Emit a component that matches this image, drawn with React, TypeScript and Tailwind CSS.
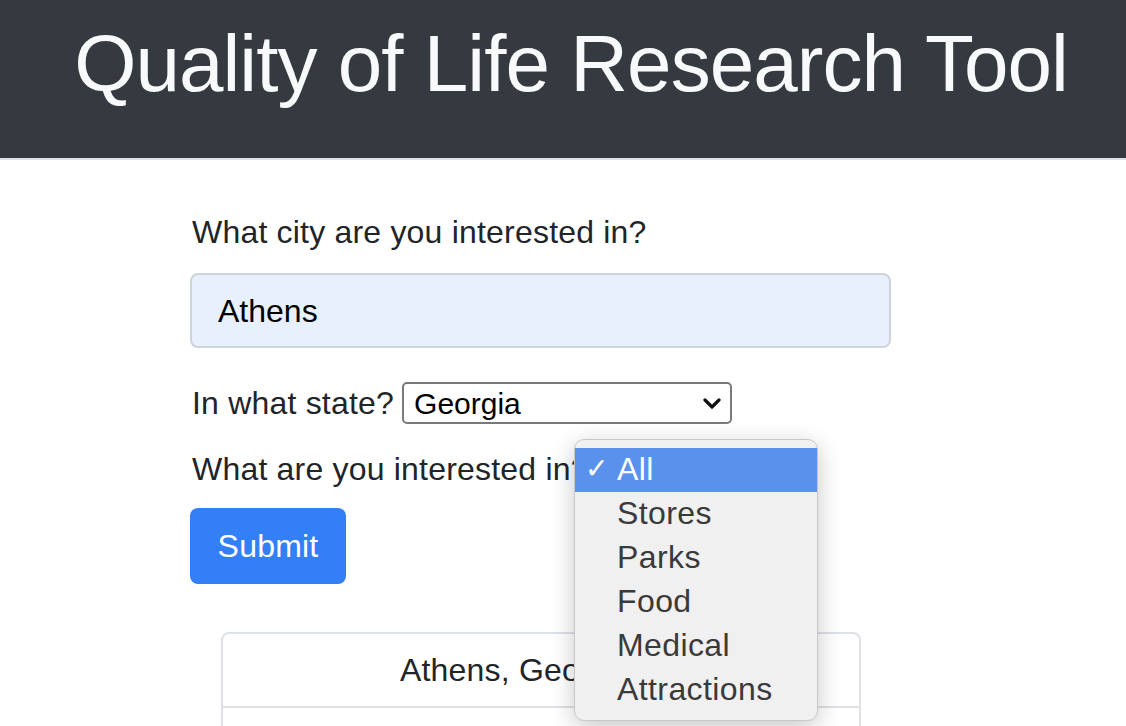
const categories = ["All", "Stores", "Parks", "Food", "Medical", "Attractions"];

const App = () => {
  return (
    <div className="min-h-screen bg-white font-['Liberation_Sans',Arial,sans-serif] text-[#212529]">
      {/* Header */}
      <header className="h-[160px] bg-[#343a40] border-b-2 border-[#dee2e6] pt-[16px] pl-[16px]">
        <h1 className="text-center text-[80px] leading-[1.2] tracking-[-0.95px] text-[#f8f9fa]">
          Quality of Life Research Tool
        </h1>
      </header>

      {/* Form */}
      <main className="ml-[190px] w-[701px] pt-[48px] tracking-[0.2px]">
        <label className="block text-[32px] leading-[48px] mb-[17px] pl-[2px]">
          What city are you interested in?
        </label>
        <div className="h-[75px] flex items-center px-[26px] bg-[#e8f0fe] border-2 border-[#ced4da] rounded-lg text-[32px] text-black tracking-normal">
          Athens
        </div>

        <div className="mt-[31px] h-[48px] flex items-center text-[32px] pl-[2px]">
          <span>In what state?</span>
          <div className="ml-[8px] w-[330px] h-[42px] flex items-center justify-between pl-[10px] pr-[9px] border-2 border-[#7a7a7a] rounded-[5px] text-[30px] text-black tracking-normal">
            <span>Georgia</span>
            <svg width="18" height="14" viewBox="0 0 18 14" fill="none">
              <polyline points="2,4 9,11 16,4" stroke="#111" strokeWidth="3.2" strokeLinecap="round" strokeLinejoin="round" />
            </svg>
          </div>
        </div>

        <div className="relative mt-[18px] h-[48px] flex items-center text-[32px] pl-[2px]">
          <span>What are you interested in?</span>
          <div className="ml-[10px] w-[150px] h-[42px] border-2 border-[#7a7a7a] rounded-[5px]" />

          {/* open dropdown */}
          <div className="absolute left-[384px] top-[-6px] w-[244px] py-[8px] bg-[#f0f0f0] border border-[#c8c8c8] rounded-[10px] shadow-[0_6px_24px_rgba(0,0,0,0.22)] z-10">
            {categories.map((c, i) => (
              <div
                key={c}
                className={
                  i === 0
                    ? "h-[44px] flex items-center bg-[#5a91ec] text-white pb-[3px]"
                    : "h-[44px] flex items-center text-[#3a3a3a] pb-[3px]"
                }
              >
                <span className="w-[42px] pl-[10px] text-[28px]">{i === 0 ? "✓" : ""}</span>
                <span className="text-[32px] tracking-[0.4px]">{c}</span>
              </div>
            ))}
          </div>
        </div>

        <button className="mt-[15px] w-[156px] h-[76px] rounded-lg bg-[#3380f6] text-white text-[32px]">
          Submit
        </button>

        {/* Results */}
        <div className="mt-[48px] ml-[31px] w-[640px] border-2 border-[#dee2e6] rounded-lg">
          <div className="py-[12px] leading-[48px] text-[32px] text-center pr-[48px] border-b-2 border-[#dee2e6]">
            Athens, Georgia
          </div>
          <div className="h-[72px]" />
        </div>
      </main>
    </div>
  );
};

export default App;
